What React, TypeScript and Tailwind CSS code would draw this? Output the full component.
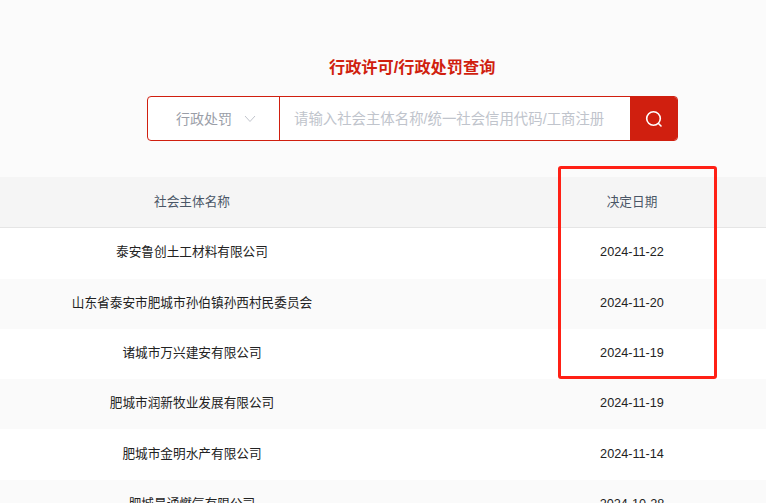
const rows = [
  ["泰安鲁创土工材料有限公司", "2024-11-22"],
  ["山东省泰安市肥城市孙伯镇孙西村民委员会", "2024-11-20"],
  ["诸城市万兴建安有限公司", "2024-11-19"],
  ["肥城市润新牧业发展有限公司", "2024-11-19"],
  ["肥城市金明水产有限公司", "2024-11-14"],
  ["肥城昊通燃气有限公司", "2024-10-28"],
];

export default function App() {
  return (
    <div className="relative h-[503px] w-[766px] overflow-hidden bg-white font-['Liberation_Sans','Noto_Sans_CJK_SC',sans-serif] text-[12.67px] text-[#222]">
      <div className="h-[177px] bg-[#fbfbfb] pt-[56px]">
        <h1 className="ml-[329px] text-[16.2px] leading-[22px] font-bold whitespace-nowrap text-[#d01f0f]">行政许可/行政处罚查询</h1>
        <div className="mt-[18px] ml-[147px] flex h-[45px] w-[531px] overflow-hidden rounded-[4px] border border-[#d01f0f] bg-white">
          <div className="flex w-[132px] items-center justify-center gap-[12px] border-r border-[#d01f0f] pt-[1px] pl-[5px] text-[14px] text-[#9a9ea8]">
            <span>行政处罚</span>
            <svg width="12" height="8" viewBox="0 0 12 8" fill="none" stroke="#c0c4cc" strokeWidth="1">
              <path d="M1 1l5 5.5 5-5.5" />
            </svg>
          </div>
          <div className="flex-1 truncate pt-[1px] pl-[14px] text-[14.4px] leading-[43px] whitespace-nowrap text-[#c0c4cc]">请输入社会主体名称/统一社会信用代码/工商注册</div>
          <div className="flex w-[47px] items-center justify-center bg-[#d01f0f]">
            <svg width="20" height="20" viewBox="0 0 20 20" fill="none" stroke="#fff" strokeWidth="1.6" strokeLinecap="round">
              <circle cx="9.5" cy="9.5" r="6.8" />
              <path d="M14.5 14.5l2.5 2.5" />
            </svg>
          </div>
        </div>
      </div>
      <div className="grid h-[51.3px] grid-cols-[384px_114px_268px] items-center border-b border-[#e5e5e5] bg-[#f5f5f5] text-center text-[#4a5666]">
        <div>社会主体名称</div>
        <div />
        <div>决定日期</div>
      </div>
      {rows.map(([name, date], i) => (
        <div key={name} className={`grid h-[50.3px] grid-cols-[384px_114px_268px] items-center pb-[1px] text-center ${i % 2 === 1 ? "bg-[#fafafa]" : "bg-white"}`}>
          <div>{name}</div>
          <div />
          <div>{date}</div>
        </div>
      ))}
      <div className="absolute top-[166px] left-[558px] h-[212.5px] w-[159px] rounded-[3px] border-[3px] border-[#ff2015]" />
    </div>
  );
}
